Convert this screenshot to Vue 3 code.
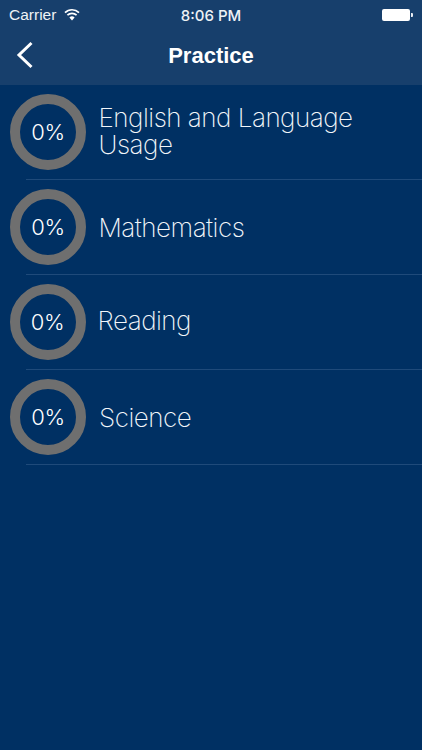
<script setup>
const rows = [
  { label: 'English and Language Usage', cls: 'first' },
  { label: 'Mathematics', cls: 'second' },
  { label: 'Reading', cls: 'third' },
  { label: 'Science', cls: 'fourth' },
]
</script>

<template>
  <div class="screen">
    <header class="bar">
      <div class="status">
        <div class="status-left">
          <span>Carrier</span>
          <svg class="wifi" width="16" height="13" viewBox="0 0 16 13">
            <path d="M1 4.6A10 10 0 0 1 15 4.6" fill="none" stroke="#fff" stroke-width="1.7" />
            <path d="M3.4 7.2A6.6 6.6 0 0 1 12.6 7.2" fill="none" stroke="#fff" stroke-width="1.7" />
            <path d="M8 12.6 5.4 9.5A3.6 3.6 0 0 1 10.6 9.5Z" fill="#fff" />
          </svg>
        </div>
        <span class="time">8:06 PM</span>
        <div class="battery">
          <span class="cell"></span>
          <span class="nub"></span>
        </div>
      </div>
      <div class="nav">
        <svg class="back" width="18" height="28" viewBox="0 0 18 28">
          <path d="M15.5 2 3 14 15.5 26" fill="none" stroke="#fff" stroke-width="3" />
        </svg>
        <h1>Practice</h1>
      </div>
    </header>
    <ul class="list">
      <li v-for="row in rows" :key="row.label" class="row" :class="row.cls">
        <div class="ring"><span>0%</span></div>
        <div class="label">{{ row.label }}</div>
      </li>
    </ul>
  </div>
</template>

<style scoped>
.screen {
  width: 422px;
  height: 750px;
  background: #003063;
  color: #fff;
  font-family: Inter, "Liberation Sans", sans-serif;
  overflow: hidden;
}
.bar {
  height: 85px;
  background: #173f6c;
  display: flex;
  flex-direction: column;
}
.status {
  height: 30px;
  padding: 0 9px;
  display: grid;
  grid-template-columns: 1fr auto 1fr;
  align-items: center;
  font-family: "Liberation Sans", sans-serif;
  font-size: 15.5px;
  color: #eef2f6;
}
.status-left {
  display: flex;
  align-items: center;
  gap: 8px;
}
.wifi {
  margin-top: -2px;
}
.time {
  font-family: Inter, sans-serif;
  font-weight: 500;
  font-size: 15px;
}
.battery {
  justify-self: end;
  display: flex;
  align-items: center;
  gap: 1px;
}
.cell {
  width: 28px;
  height: 12px;
  background: #fff;
  border-radius: 2px;
}
.nub {
  width: 2px;
  height: 4px;
  background: #e8edf3;
  border-radius: 0 1px 1px 0;
}
.nav {
  flex: 1;
  position: relative;
  display: flex;
  align-items: center;
  justify-content: center;
}
.back {
  position: absolute;
  left: 16px;
  top: 11px;
}
h1 {
  margin: 0 0 3px;
  font-family: "Liberation Sans", sans-serif;
  font-size: 22px;
  font-weight: 700;
}
.list {
  list-style: none;
  margin: 0;
  padding: 0;
}
.row {
  height: 95px;
  position: relative;
  display: flex;
  align-items: center;
  padding-left: 10px;
  gap: 12.5px;
}
.row::after {
  content: "";
  position: absolute;
  left: 26px;
  right: 0;
  bottom: 0;
  height: 1px;
  background: #1f4a7a;
}
.ring {
  width: 76px;
  height: 76px;
  box-sizing: border-box;
  border: 10.5px solid #6f6f6f;
  border-radius: 50%;
  display: flex;
  align-items: center;
  justify-content: center;
  font-family: Inter, sans-serif;
  font-weight: 300;
  font-size: 22px;
  letter-spacing: -0.3px;
  flex: none;
  margin-top: -1px;
}
.label {
  font-family: Inter, sans-serif;
  font-weight: 200;
  font-size: 26px;
  letter-spacing: -0.5px;
  line-height: 27px;
  width: 270px;
  color: #f2f6fa;
}
.first .label {
  margin-top: -3px;
}
.third {
  padding-left: 9.5px;
  gap: 12px;
}
.third .label {
  margin-top: -5px;
}
.fourth .label {
  margin-left: 0.5px;
}
</style>
